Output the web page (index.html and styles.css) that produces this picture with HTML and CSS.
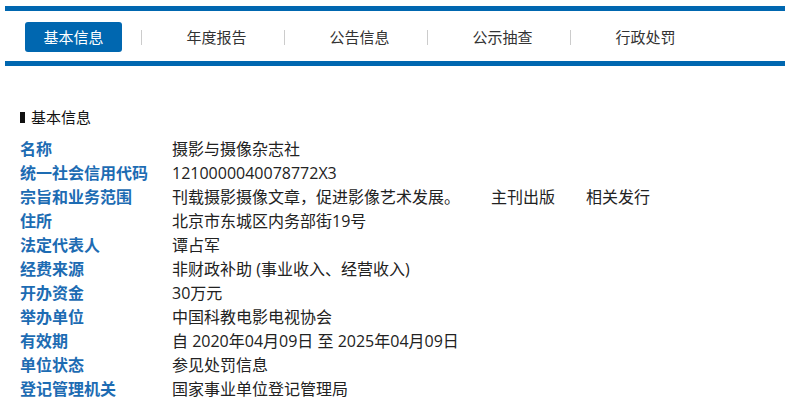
FILE: index.html
```html
<!DOCTYPE html>
<html lang="zh-CN">
<head>
    <meta charset="UTF-8">
    <title>基本信息</title>
    <link rel="stylesheet" href="styles.css">
</head>
<body>
<div class="page">
    <div class="nav">
        <ul class="tabs">
            <li class="active"><a>基本信息</a></li>
            <li><a>年度报告</a></li>
            <li><a>公告信息</a></li>
            <li><a>公示抽查</a></li>
            <li><a>行政处罚</a></li>
        </ul>
    </div>

    <h3 class="section-title">基本信息</h3>
    <dl class="info">
        <dt>名称</dt><dd>摄影与摄像杂志社</dd>
        <dt>统一社会信用代码</dt><dd>1210000040078772X3</dd>
        <dt>宗旨和业务范围</dt><dd>刊载摄影摄像文章，促进影像艺术发展。<span class="extra">主刊出版</span><span class="extra">相关发行</span></dd>
        <dt>住所</dt><dd>北京市东城区内务部街19号</dd>
        <dt>法定代表人</dt><dd>谭占军</dd>
        <dt>经费来源</dt><dd>非财政补助 (事业收入、经营收入)</dd>
        <dt>开办资金</dt><dd>30万元</dd>
        <dt>举办单位</dt><dd>中国科教电影电视协会</dd>
        <dt>有效期</dt><dd>自 2020年04月09日 至 2025年04月09日</dd>
        <dt>单位状态</dt><dd>参见处罚信息</dd>
        <dt>登记管理机关</dt><dd>国家事业单位登记管理局</dd>
    </dl>
</div>
</body>
</html>
```

FILE: styles.css
```css
body {
    margin: 0;
    background: #fff;
    font-family: "Open Sans", "Noto Sans CJK SC", sans-serif;
    color: #222;
}
.page {
    width: 780px;
    margin-left: 5px;
    padding-top: 6px;
}
.nav {
    border-top: 5px solid #0067b0;
    border-bottom: 5px solid #0067b0;
    padding: 11px 0 9px 20px;
}
.tabs {
    display: flex;
    align-items: center;
    list-style: none;
    margin: 0;
    padding: 0;
}
.tabs li {
    display: flex;
    align-items: center;
}
.tabs li + li::before {
    content: "";
    width: 1px;
    height: 15px;
    background: #ccc;
    margin: 0 26px 0 19px;
}
.tabs a {
    display: block;
    width: 97px;
    height: 30px;
    line-height: 30px;
    text-align: center;
    font-size: 15px;
    color: #333;
    border-radius: 3px;
}
.tabs .active a {
    background: #0067b0;
    color: #fff;
}
.section-title {
    margin: 39px 0 0 15px;
    font-size: 15px;
    font-weight: normal;
    line-height: 24px;
    color: #111;
    display: flex;
    align-items: center;
}
.section-title::before {
    content: "";
    width: 5px;
    height: 11px;
    background: #111;
    margin-right: 6px;
}
.info {
    display: grid;
    grid-template-columns: 152px auto;
    margin: 8px 0 0 15px;
    font-size: 16px;
    line-height: 24px;
}
.info dt {
    font-weight: bold;
    color: #1d6cb3;
}
.info dd {
    margin: 0;
    color: #222;
}
.extra {
    margin-left: 31px;
}
```
